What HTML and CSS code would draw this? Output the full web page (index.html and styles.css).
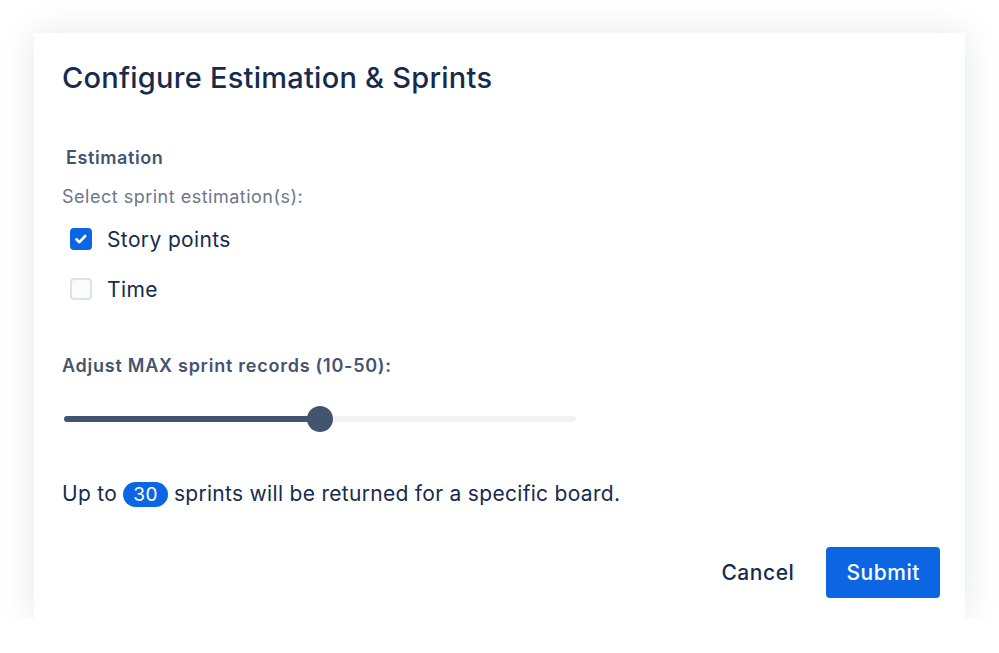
FILE: index.html
```html
<!DOCTYPE html>
<html lang="en">
<head>
    <meta charset="UTF-8">
    <title>Configure Estimation &amp; Sprints</title>
    <link rel="stylesheet" href="styles.css">
</head>
<body>
    <div class="modal">
        <h1 class="modal-title">Configure Estimation &amp; Sprints</h1>

        <div class="section">
            <div class="section-label">Estimation</div>
            <div class="hint">Select sprint estimation(s):</div>
            <label class="check-row">
                <span class="box checked">
                    <svg width="18" height="18" viewBox="0 0 18 18"><path d="M4.4 9.3l3 2.9 5.8-6.2" fill="none" stroke="#fff" stroke-width="2.6" stroke-linecap="round" stroke-linejoin="round"/></svg>
                </span>
                Story points
            </label>
            <label class="check-row">
                <span class="box"></span>
                Time
            </label>
        </div>

        <div class="section slider-section">
            <div class="section-label">Adjust MAX sprint records (10-50):</div>
            <div class="slider">
                <div class="track">
                    <div class="fill" style="width: 50%"></div>
                    <div class="thumb" style="left: 50%"></div>
                </div>
            </div>
        </div>

        <p class="summary">Up to <span class="badge">30</span> sprints will be returned for a specific board.</p>

        <div class="footer">
            <button class="btn btn-subtle">Cancel</button>
            <button class="btn btn-primary">Submit</button>
        </div>
    </div>
</body>
</html>
```

FILE: styles.css
```css
body {
    margin: 0;
    background-color: #fff;
    font-family: Inter, "Noto Sans", sans-serif;
    color: #172B4D;
}

.modal {
    width: 931px;
    height: 586px;
    margin: 33px 0 0 34px;
    box-sizing: border-box;
    padding: 26px 25px 0 28px;
    background-color: #fff;
    box-shadow: 0 0 34px rgba(9, 30, 66, 0.1);
    display: flex;
    flex-direction: column;
}

.modal-title {
    margin: 0;
    font-size: 29px;
    font-weight: 500;
    line-height: 38px;
    color: #172B4D;
    letter-spacing: 0.25px;
}

.section {
    margin-top: 49px;
}

.section-label {
    font-size: 18px;
    font-weight: 600;
    color: #44546F;
    line-height: 24px;
    letter-spacing: 0.6px;
    padding-left: 4px;
}

.hint {
    margin-top: 15px;
    font-size: 18px;
    color: #6B778C;
    line-height: 24px;
    letter-spacing: 0.5px;
}

.check-row {
    display: flex;
    align-items: center;
    gap: 15px;
    height: 50px;
    font-size: 21px;
    letter-spacing: 0.37px;
    color: #172B4D;
    padding-left: 8px;
}

.check-row:first-of-type {
    margin-top: 5px;
}

.box {
    width: 18px;
    height: 18px;
    border: 2px solid #DFE1E6;
    border-radius: 4px;
    background-color: #FAFBFC;
    display: flex;
    align-items: center;
    justify-content: center;
}

.box.checked {
    border-color: #0C66E4;
    background-color: #0C66E4;
}

.slider-section {
    margin-top: 40px;
}

.slider-section .section-label {
    padding-left: 0;
    letter-spacing: 0.75px;
}

.slider {
    margin-top: 28px;
    width: 512px;
    height: 26px;
    display: flex;
    align-items: center;
    padding-left: 2px;
}

.track {
    position: relative;
    width: 100%;
    height: 6px;
    border-radius: 3px;
    background-color: #F1F2F4;
}

.fill {
    height: 100%;
    border-radius: 3px;
    background-color: #44546F;
}

.thumb {
    position: absolute;
    top: 50%;
    width: 26px;
    height: 26px;
    margin: -13px 0 0 -13px;
    border-radius: 50%;
    background-color: #44546F;
}

.summary {
    margin: 48px 0 0;
    font-size: 21px;
    line-height: 28px;
    letter-spacing: 0.3px;
    color: #172B4D;
}

.badge {
    display: inline-block;
    background-color: #0C66E4;
    color: #fff;
    border-radius: 13px;
    padding: 0 10px;
    font-size: 19px;
    line-height: 25px;
    letter-spacing: 0.3px;
}

.footer {
    margin-top: auto;
    margin-bottom: 21px;
    display: flex;
    justify-content: flex-end;
    gap: 12px;
}

.btn {
    font-family: inherit;
    font-size: 21px;
    font-weight: 500;
    letter-spacing: 0.55px;
    height: 51px;
    padding: 0 20px;
    border: none;
    border-radius: 4px;
    cursor: pointer;
}

.btn-subtle {
    background-color: transparent;
    color: #172B4D;
}

.btn-primary {
    background-color: #0C66E4;
    color: #fff;
}
```
